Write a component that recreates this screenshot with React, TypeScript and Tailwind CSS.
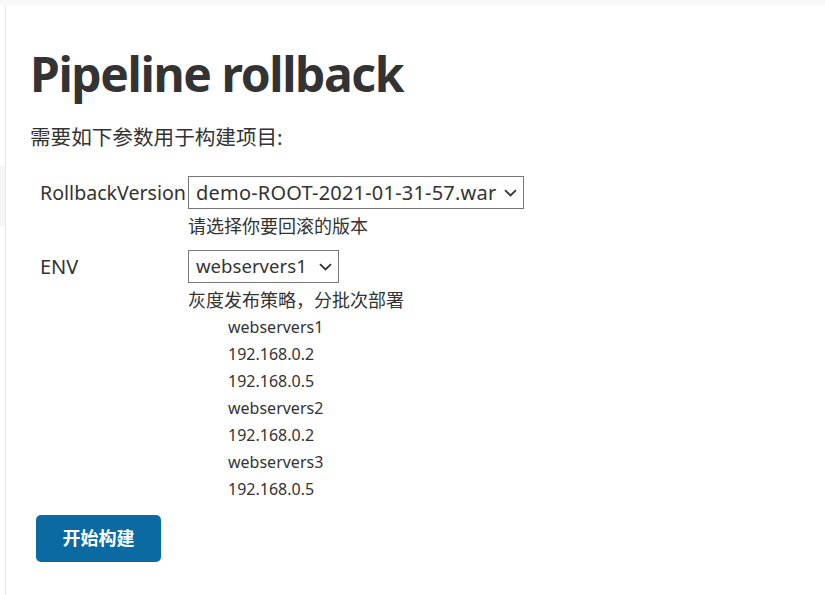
import React from 'react';

const servers = ['webservers1', '192.168.0.2', '192.168.0.5', 'webservers2', '192.168.0.2', 'webservers3', '192.168.0.5'];

const font = { fontFamily: '"Noto Sans", "Noto Sans CJK SC", sans-serif' };

const Chevron = () => (
  <svg width="13" height="8" viewBox="0 0 13 8" className="shrink-0">
    <path d="M1 1.2 L6.5 6.5 L12 1.2" fill="none" stroke="#333" strokeWidth="1.8" />
  </svg>
);

const FakeSelect: React.FC<{ value: string; className: string }> = ({ value, className }) => (
  <div className={`flex h-[33px] items-center justify-between border border-[#767676] bg-white pl-[7px] pr-[6px] ${className}`}>
    <span className="leading-none text-[#333] whitespace-nowrap">{value}</span>
    <Chevron />
  </div>
);

export default function App() {
  return (
    <div className="min-h-screen w-full bg-white text-[#333]" style={font}>
      <div className="h-[5px] w-full bg-[#f8f8f8]" />
      <div className="flex min-h-[590px]">
        <div className="w-[5px] shrink-0">
          <div className="mt-[161px] h-[60px] bg-[#f5f5f5]" />
        </div>
        <main className="flex-1 border-l border-[#e8e8e8] pl-[24px]">
          <h1 className="mt-[34px] text-[48px] font-bold leading-[70px] tracking-[-1.4px] text-[#333]">Pipeline rollback</h1>
          <p className="mt-[14px] text-[20.6px] leading-[28px]">需要如下参数用于构建项目:</p>

          <div className="mt-[25px] flex">
            <div className="w-[158px] pl-[10px] pt-[2px] text-[19.6px] leading-[30px]">RollbackVersion</div>
            <div>
              <FakeSelect value="demo-ROOT-2021-01-31-57.war" className="w-[336px] text-[20px] tracking-[0.2px]" />
              <div className="mt-[3px] text-[18px] leading-[28px]">请选择你要回滚的版本</div>
            </div>
          </div>

          <div className="mt-[10px] flex">
            <div className="w-[158px] pl-[10px] pt-[2px] text-[20px] leading-[30px]">ENV</div>
            <div>
              <FakeSelect value="webservers1" className="w-[151px] text-[18.6px]" />
              <div className="mt-[3px] text-[18px] leading-[28px]">灰度发布策略，分批次部署</div>
              <ul className="pl-[40px] text-[16px] leading-[27px]">
                {servers.map((s, i) => (
                  <li key={i}>{s}</li>
                ))}
              </ul>
            </div>
          </div>

          <button className="mt-[12px] ml-[6px] h-[47px] w-[125px] rounded-[5px] bg-[#0b6aa2] text-[18px] font-bold text-white">
            开始构建
          </button>
        </main>
      </div>
    </div>
  );
}
